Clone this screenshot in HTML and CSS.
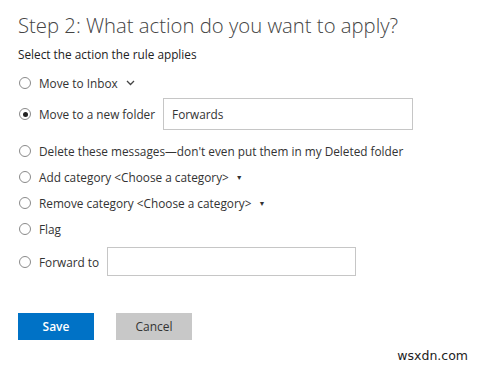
FILE: index.html
```html
<!DOCTYPE html>
<html lang="en">
<head>
    <meta charset="UTF-8">
    <meta name="viewport" content="width=device-width, initial-scale=1.0">
    <title>Rule action</title>
    <link rel="stylesheet" href="styles.css">
</head>
<body>
    <div class="container">
        <h1>Step 2: What action do you want to apply?</h1>
        <p class="hint">Select the action the rule applies</p>

        <label class="option first">
            <input type="radio" name="action">
            <span>Move to Inbox</span>
            <svg class="chevron" width="9" height="6" viewBox="0 0 9 6"><path d="M1 1 L4.5 4.5 L8 1" fill="none" stroke="#444" stroke-width="1.3"/></svg>
        </label>
        <label class="option with-input">
            <input type="radio" name="action" checked>
            <span>Move to a new folder</span>
            <input type="text" class="field folder" value="Forwards">
        </label>
        <label class="option spaced">
            <input type="radio" name="action">
            <span>Delete these messages—don't even put them in my Deleted folder</span>
        </label>
        <label class="option">
            <input type="radio" name="action">
            <span>Add category &lt;Choose a category&gt;</span>
            <span class="caret">▼</span>
        </label>
        <label class="option">
            <input type="radio" name="action">
            <span>Remove category &lt;Choose a category&gt;</span>
            <span class="caret">▼</span>
        </label>
        <label class="option">
            <input type="radio" name="action">
            <span>Flag</span>
        </label>
        <label class="option with-input forward">
            <input type="radio" name="action">
            <span>Forward to</span>
            <input type="text" class="field to">
        </label>

        <div class="buttons">
            <button class="save">Save</button>
            <button class="cancel">Cancel</button>
        </div>
    </div>
    <div class="mark">wsxdn.com</div>
</body>
</html>
```

FILE: styles.css
```css
body {
    font-family: "Open Sans", "Liberation Sans", sans-serif;
    margin: 0;
    color: #333;
    background: #fff;
}
.container {
    padding: 12px 18px 0 18px;
}
h1 {
    font-size: 20.3px;
    font-weight: 300;
    color: #444;
    line-height: 26px;
    margin: 0;
}
.hint {
    font-size: 11.8px;
    line-height: 18px;
    margin: 7px 0 0 0;
    color: #222;
}
.option {
    display: flex;
    align-items: center;
    height: 26px;
    font-size: 11.8px;
    color: #333;
}
.option.first {
    margin-top: 7px;
}
.option.with-input {
    height: 32px;
    margin-top: 2px;
}
.option.spaced {
    margin-top: 8px;
}
.option.forward {
    height: 29px;
    margin-top: 5px;
}
input[type="radio"] {
    appearance: none;
    width: 12px;
    height: 12px;
    border: 1px solid #8a8a8a;
    border-radius: 50%;
    margin: 0 8px 0 1px;
    box-sizing: border-box;
    display: flex;
    align-items: center;
    justify-content: center;
    flex-shrink: 0;
}
input[type="radio"]:checked::after {
    content: "";
    width: 5px;
    height: 5px;
    border-radius: 50%;
    background: #222;
}
.chevron {
    margin-left: 8px;
}
.caret {
    font-size: 7px;
    margin-left: 7px;
    color: #333;
}
.field {
    height: 100%;
    box-sizing: border-box;
    border: 1px solid #c6c6c6;
    font-family: inherit;
    font-size: 11.8px;
    color: #333;
    padding: 0 8px;
    outline: none;
}
.folder {
    width: 250px;
    margin-left: 8px;
}
.to {
    width: 249px;
    margin-left: 8px;
}
.buttons {
    display: flex;
    gap: 22px;
    margin-top: 37px;
}
.buttons button {
    width: 76px;
    height: 27px;
    border: none;
    font-family: inherit;
    font-size: 12px;
}
.save {
    background-color: #0072c6;
    color: #fff;
    font-weight: 600;
}
.cancel {
    background-color: #c8c8c8;
    color: #333;
}
.mark {
    position: absolute;
    right: 12px;
    bottom: 3px;
    font-family: "DejaVu Sans", sans-serif;
    font-size: 12.5px;
    color: #222;
}
```
